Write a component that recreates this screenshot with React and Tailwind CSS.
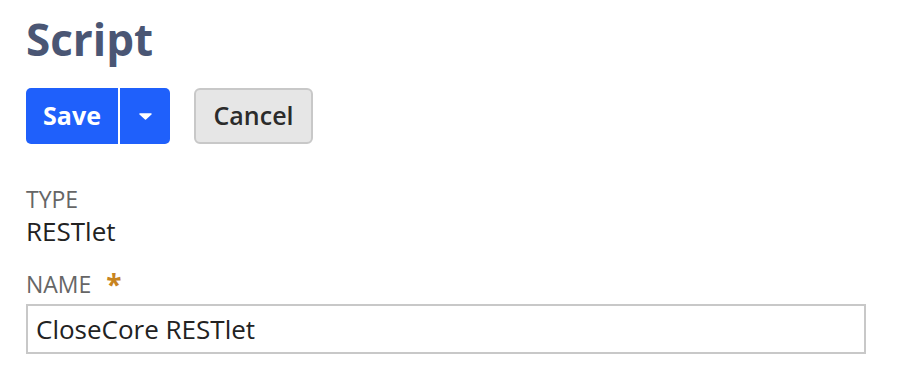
export default function App() {
  return (
    <div className="min-h-[374px] w-[906px] bg-white pl-[26px] pt-[10px]" style={{ fontFamily: '"Open Sans", sans-serif' }}>
      <h1 className="text-[44px] font-bold leading-[58px] text-[#4a5674]">Script</h1>
      <div className="mt-[20px] flex items-center gap-[24px]">
        <div className="flex h-[56px] w-[144px] overflow-hidden rounded-[5px] bg-[#1f60fb]">
          <button className="flex w-[92px] items-center justify-center text-[25px] font-bold text-white">Save</button>
          <div className="w-[2px] bg-white" />
          <button className="flex flex-1 items-center justify-center">
            <svg width="13" height="7" viewBox="0 0 13 7"><path d="M1 1h11L6.5 6z" fill="white" stroke="white" strokeWidth="1.5" strokeLinejoin="round" /></svg>
          </button>
        </div>
        <button className="flex h-[56px] w-[119px] items-center justify-center rounded-[6px] border-2 border-[#c8c8c8] bg-[#e6e6e6] text-[25px] font-semibold text-[#2b2b2b]">Cancel</button>
      </div>
      <div className="mt-[40px] text-[23px] leading-[30px] text-[#666666]">TYPE</div>
      <div className="text-[26px] leading-[34px] text-[#222222]">RESTlet</div>
      <div className="mt-[21px] flex items-center text-[23px] leading-[30px] text-[#666666]">
        NAME <span className="ml-[15px] text-[28px] font-bold text-[#c8841f]">*</span>
      </div>
      <div className="mt-[5px] flex h-[50px] w-[840px] items-center border-2 border-[#c8c8c8] px-[8px] text-[26px] text-[#222222]">CloseCore RESTlet</div>
    </div>
  );
}
